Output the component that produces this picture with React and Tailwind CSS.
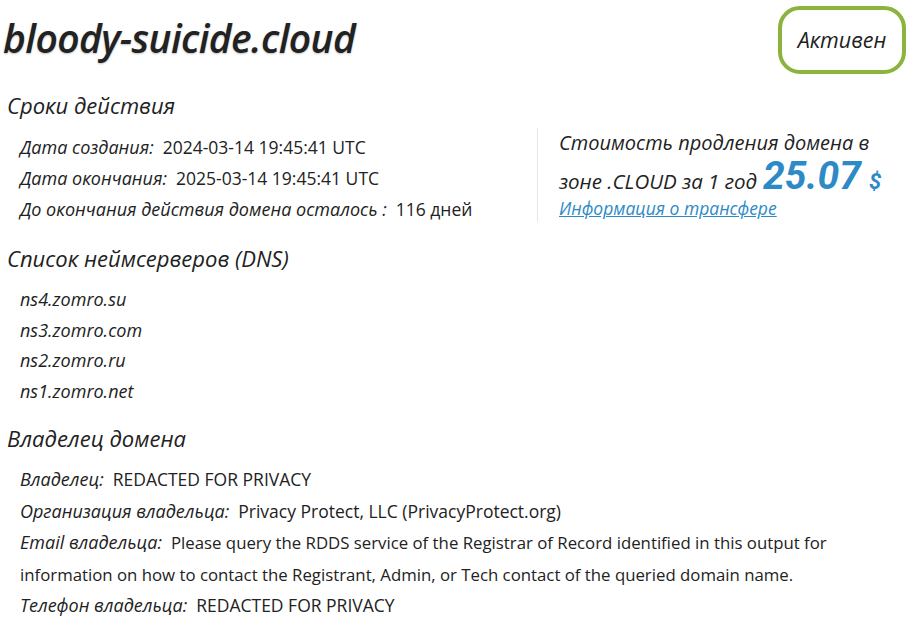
import React from 'react';

const dates = [
  { label: 'Дата создания:', value: '2024-03-14 19:45:41 UTC' },
  { label: 'Дата окончания:', value: '2025-03-14 19:45:41 UTC' },
  { label: 'До окончания действия домена осталось :', value: '116 дней' },
];

const nameservers = ['ns4.zomro.su', 'ns3.zomro.com', 'ns2.zomro.ru', 'ns1.zomro.net'];

const owner = [
  { label: 'Владелец:', value: 'REDACTED FOR PRIVACY' },
  { label: 'Организация владельца:', value: 'Privacy Protect, LLC (PrivacyProtect.org)' },
  {
    label: 'Email владельца:',
    value:
      'Please query the RDDS service of the Registrar of Record identified in this output for information on how to contact the Registrant, Admin, or Tech contact of the queried domain name.',
    small: true,
  },
  { label: 'Телефон владельца:', value: 'REDACTED FOR PRIVACY' },
];

function Row({ label, value, small }) {
  return (
    <div>
      <span className="italic text-[18px] leading-none">{label}</span>
      <span className={`ml-[9px] leading-none ${small ? 'text-[16.8px]' : 'text-[17.5px]'}`}>{value}</span>
    </div>
  );
}

export default function App() {
  return (
    <div className="min-h-[635px] bg-white pt-[6px] pl-[3px] pr-[14px] text-[#222] font-['Open_Sans','Noto_Sans',sans-serif]">
      <div className="flex items-center justify-between h-[68px]">
        <h1 className="-mt-[4px] text-[39px] font-semibold italic tracking-[-0.6px] [text-shadow:0_1px_2px_rgba(0,0,0,0.25)]">
          bloody-suicide.cloud
        </h1>
        <div className="flex h-[68px] w-[128px] items-center justify-center rounded-[22px] border-4 border-[#8cb43c] text-[21.5px] italic">
          Активен
        </div>
      </div>

      <h2 className="mt-[16px] pl-[4px] text-[22px] leading-[30px] italic">Сроки действия</h2>

      <div className="mt-[8px] flex">
        <div className="w-[534px] pt-[4px] pl-[17px] text-[17px] leading-[31px]">
          {dates.map((d) => (
            <Row key={d.label} {...d} />
          ))}
        </div>
        <div className="h-[94px] border-l border-[#e6e6e6] pl-[21px] italic">
          <div className="text-[20px] leading-[30px]">Стоимость продления домена в</div>
          <div className="flex items-baseline h-[36px] text-[20.5px]">
            <span>зоне .CLOUD за 1 год</span>
            <span className="ml-[6px] font-['Roboto',sans-serif] text-[39px] leading-[36px] font-bold text-[#2d8ac6]">
              25.07
            </span>
            <span className="ml-[8px] font-['Roboto',sans-serif] text-[22px] font-bold text-[#2d8ac6]">$</span>
          </div>
          <a href="#" className="block text-[17.5px] leading-[28px] text-[#2d8ac6] underline">
            Информация о трансфере
          </a>
        </div>
      </div>

      <h2 className="mt-[18px] pl-[4px] text-[22px] leading-[30px] italic">Список неймсерверов (DNS)</h2>
      <ul className="mt-[11px] pl-[17px] text-[18px] leading-[30.5px] italic">
        {nameservers.map((ns) => (
          <li key={ns}>{ns}</li>
        ))}
      </ul>

      <h2 className="mt-[17px] pl-[4px] text-[22px] leading-[30px] italic">Владелец домена</h2>
      <div className="mt-[11px] w-[862px] pl-[17px] text-[17px] leading-[31.5px]">
        {owner.map((o) => (
          <Row key={o.label} {...o} />
        ))}
      </div>
    </div>
  );
}
